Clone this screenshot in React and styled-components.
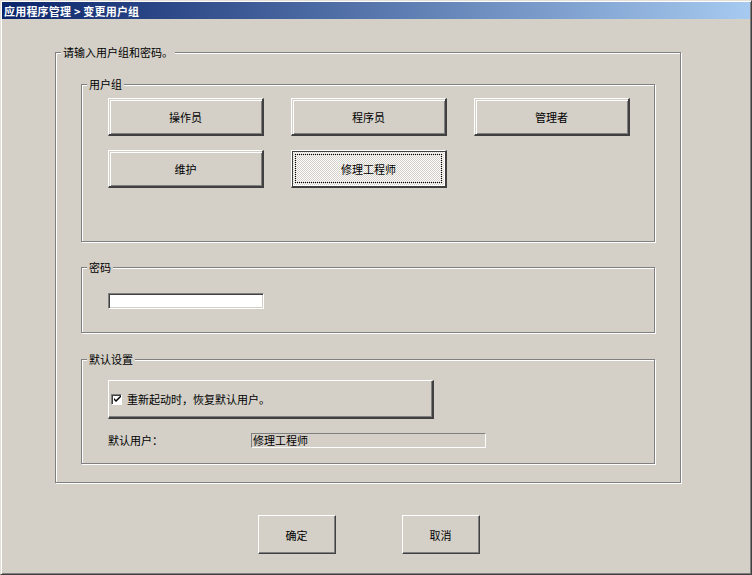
import React from "react";
import styled, { createGlobalStyle } from "styled-components";

const Global = createGlobalStyle`
  html, body { margin: 0; padding: 0; background: #d4d0c8; }
  * { box-sizing: border-box; }
`;

const Window = styled.div`
  width: 752px;
  height: 575px;
  background: #d4d0c8;
  border: 1px solid;
  border-color: #e4e0d8 #404040 #404040 #e4e0d8;
  box-shadow: inset 1px 1px #fff, inset -1px -1px #808080;
  padding: 1px;
  display: flex;
  flex-direction: column;
  font: 11px "Noto Sans CJK SC", "Noto Sans", sans-serif;
  color: #000;
`;

const TitleBar = styled.div`
  height: 17px;
  flex: none;
  display: flex;
  align-items: center;
  padding-left: 2px;
  background: linear-gradient(to right, #0a246a, #a6caf0);
  color: #fff;
  font-weight: bold;
  font-size: 11px;
  letter-spacing: 0.2px;
`;

const Body = styled.div`
  flex: 1;
  padding: 27px 0 0 53px;
  display: flex;
  flex-direction: column;
`;

const Group = styled.fieldset`
  margin: 0;
  padding: 0;
  min-width: 0;
  border: 1px solid #808080;
  box-shadow: inset 1px 1px #fff, 1px 1px #fff;
  width: ${(p) => p.$width || "auto"};
`;

const Legend = styled.legend`
  margin-left: 5px;
  padding: 0 2px;
  line-height: 12px;
  font-size: 11px;
  background: #d4d0c8;
`;

const OuterContent = styled.div`
  padding: 20px 25px 18px 25px;
  display: flex;
  flex-direction: column;
`;

const Spacer = styled.div`
  height: ${(p) => p.$h}px;
  flex: none;
`;

const ButtonGrid = styled.div`
  padding: 8px 0 53px 26px;
  display: grid;
  grid-template-columns: repeat(3, 156px);
  column-gap: 27px;
  row-gap: 14px;
`;

const RoleButton = styled.button`
  height: 38px;
  margin: 0;
  padding: 0;
  font: inherit;
  color: #000;
  border-style: solid;
  border-width: 1px 2px 2px 1px;
  border-color: #fff #404040 #404040 #fff;
  background: #d4d0c8;
  box-shadow: inset 1px 1px #d4d0c8, inset 2px 2px #fff, inset -1px -1px #808080;
  display: flex;
  align-items: center;
  justify-content: center;
`;

const PressedButton = styled.button`
  height: 38px;
  margin: 0;
  padding: 3px;
  font: inherit;
  color: #000;
  border-style: solid;
  border-width: 1px 2px 2px 1px;
  border-color: #fff #404040 #404040 #fff;
  background-color: #fff;
  background-image: repeating-conic-gradient(#d4d0c8 0 25%, #fff 0 50%);
  background-size: 2px 2px;
  box-shadow: inset 1px 1px #404040, inset -1px -1px #fff;
  display: flex;
`;

const FocusRing = styled.span`
  flex: 1;
  border: 1px dotted #000;
  display: flex;
  align-items: center;
  justify-content: center;
`;

const PasswordContent = styled.div`
  padding: 20px 0 23px 26px;
`;

const TextInput = styled.input`
  display: block;
  width: 156px;
  height: 16px;
  margin: 0;
  padding: 0 2px;
  font: inherit;
  background: #fff;
  border: 1px solid;
  border-color: #808080 #fff #fff #808080;
  box-shadow: inset 1px 1px #404040, inset -1px -1px #d4d0c8;
  outline: none;
`;

const DefaultContent = styled.div`
  padding: 15px 0 15px 26px;
  display: flex;
  flex-direction: column;
  gap: 13px;
`;

const CheckButton = styled.label`
  width: 326px;
  height: 39px;
  display: flex;
  align-items: center;
  gap: 5px;
  padding-left: 2px;
  border-style: solid;
  border-width: 1px 2px 2px 1px;
  border-color: #fff #404040 #404040 #fff;
  box-shadow: inset -1px -1px #808080;
`;

const CheckBox = styled.span`
  width: 11px;
  height: 11px;
  flex: none;
  background: #fff;
  border: 1px solid;
  border-color: #808080 #fff #fff #808080;
  box-shadow: inset 1px 1px #404040;
  display: flex;
  align-items: center;
  justify-content: center;
  padding: 1px 0 0 1px;
`;

const DefaultRow = styled.div`
  display: grid;
  grid-template-columns: 143px 235px;
  align-items: center;
`;

const ReadOnlyField = styled.div`
  height: 15px;
  display: flex;
  align-items: center;
  padding-left: 1px;
  border: 1px solid;
  border-color: #808080 #fff #fff #808080;
  background: #d4d0c8;
  font-size: 11px;
`;

const Footer = styled.div`
  width: 627px;
  margin-top: 32px;
  display: flex;
  justify-content: center;
  gap: 66px;
`;

const DialogButton = styled.button`
  width: 78px;
  height: 39px;
  margin: 0;
  padding: 0;
  font: inherit;
  color: #000;
  background: #d4d0c8;
  border-style: solid;
  border-width: 1px;
  border-color: #fff #404040 #404040 #fff;
  box-shadow: inset -1px -1px #808080;
`;

const roles = ["操作员", "程序员", "管理者", "维护"];

export default function App() {
  return (
    <>
      <Global />
      <Window>
        <TitleBar>应用程序管理 &gt; 变更用户组</TitleBar>
        <Body>
          <Group $width="626px">
            <Legend>请输入用户组和密码。</Legend>
            <OuterContent>
              <Group>
                <Legend>用户组</Legend>
                <ButtonGrid>
                  {roles.map((r) => (
                    <RoleButton key={r}>{r}</RoleButton>
                  ))}
                  <PressedButton>
                    <FocusRing>修理工程师</FocusRing>
                  </PressedButton>
                </ButtonGrid>
              </Group>
              <Spacer $h={19} />
              <Group>
                <Legend>密码</Legend>
                <PasswordContent>
                  <TextInput type="password" />
                </PasswordContent>
              </Group>
              <Spacer $h={20} />
              <Group>
                <Legend>默认设置</Legend>
                <DefaultContent>
                  <CheckButton>
                    <CheckBox>
                      <svg width="7" height="7" viewBox="0 0 7 7">
                        <path d="M0 2 L0 4 L2 6 L7 1 L7 -1 L2 4 Z" fill="#000" />
                      </svg>
                    </CheckBox>
                    重新起动时，恢复默认用户。
                  </CheckButton>
                  <DefaultRow>
                    <span>默认用户：</span>
                    <ReadOnlyField>修理工程师</ReadOnlyField>
                  </DefaultRow>
                </DefaultContent>
              </Group>
            </OuterContent>
          </Group>
          <Footer>
            <DialogButton>确定</DialogButton>
            <DialogButton>取消</DialogButton>
          </Footer>
        </Body>
      </Window>
    </>
  );
}
